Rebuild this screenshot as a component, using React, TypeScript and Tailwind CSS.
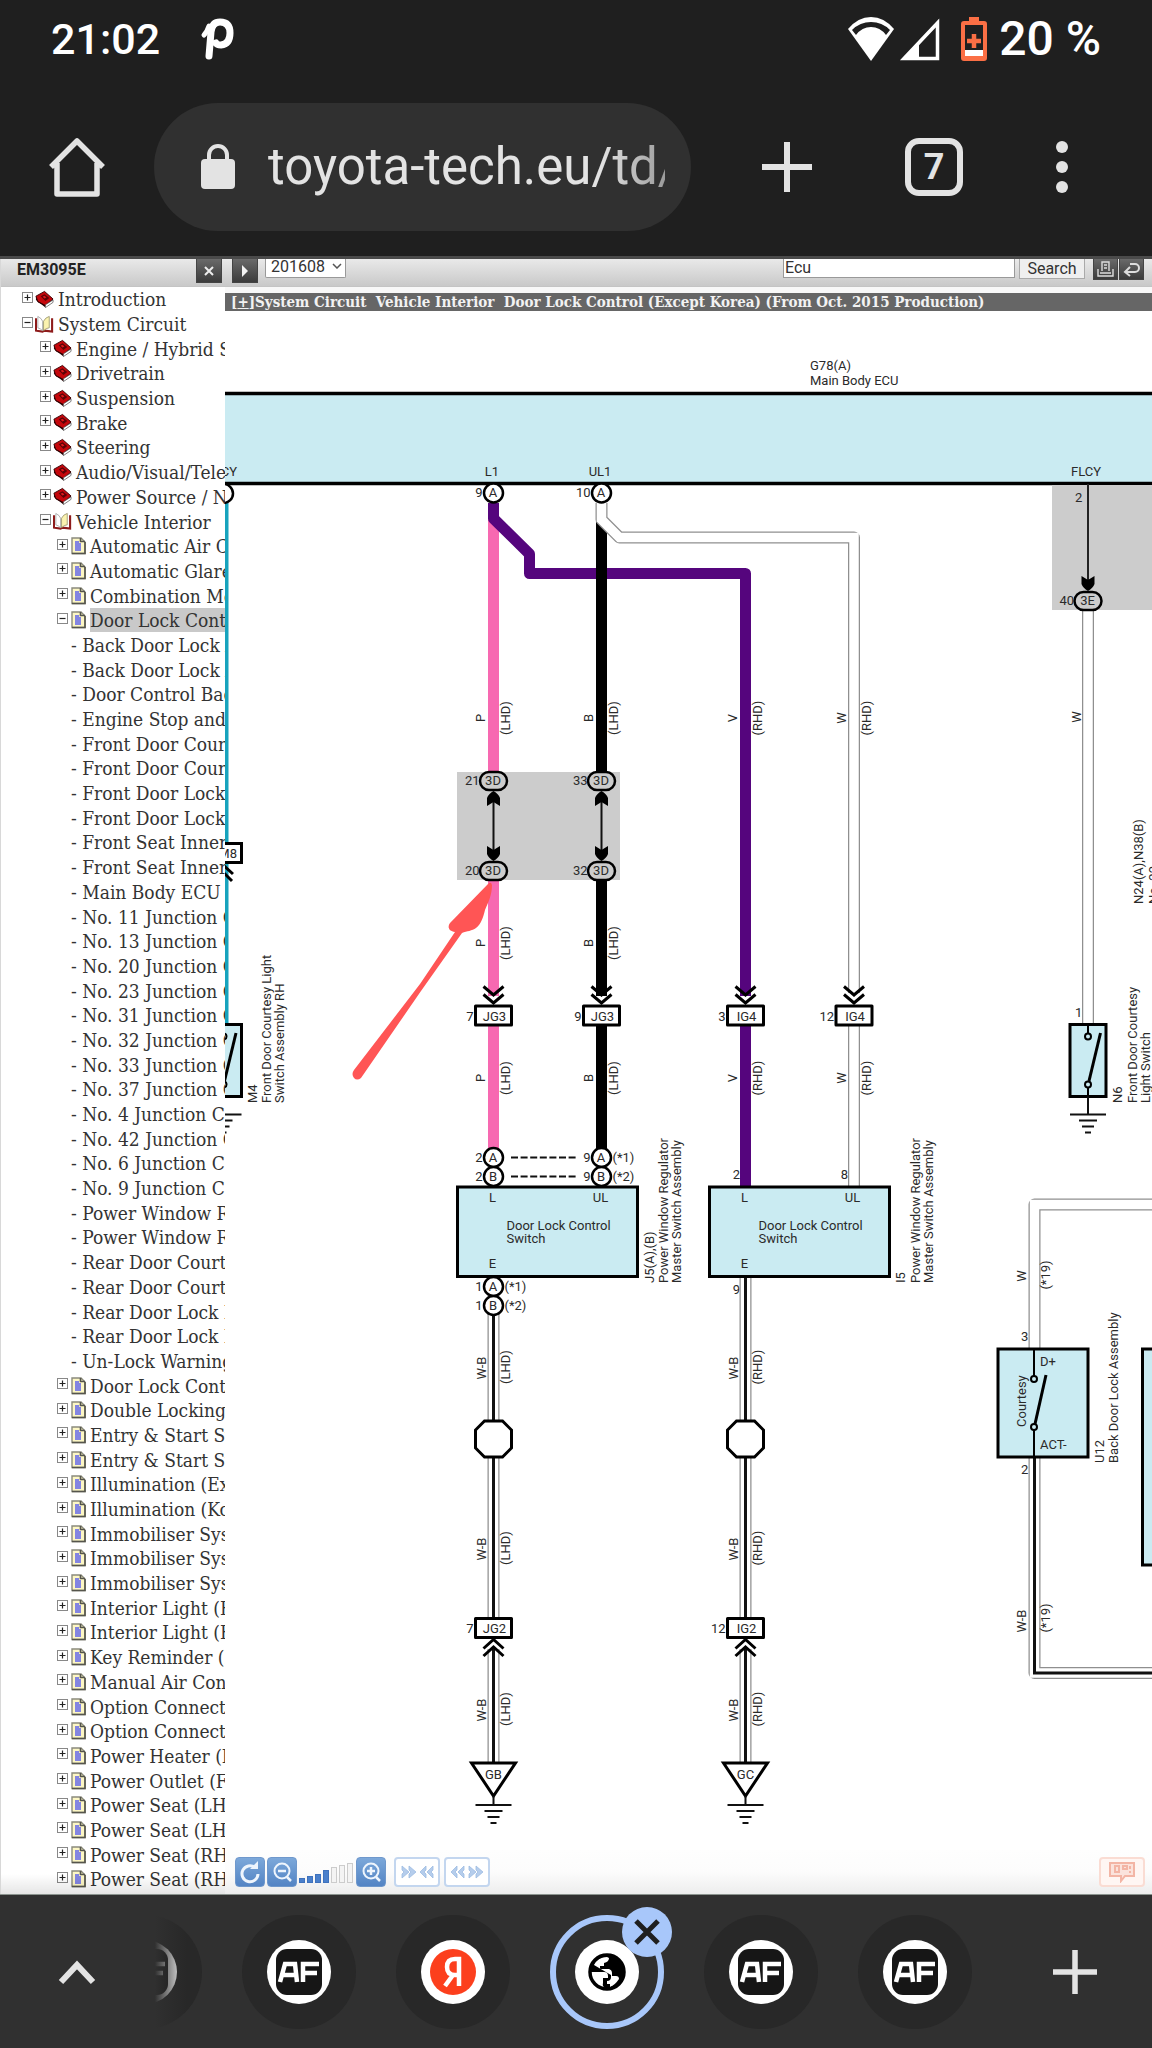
import type { ReactNode } from "react";
import clsx from "clsx";

type RowKind = "book" | "open" | "doc" | "leaf";

interface TreeRow {
  label: string;
  kind: RowKind;
  level: 0 | 1 | 2 | 3;
  expanded?: boolean;
  selected?: boolean;
}

const book = (label: string, level: 0 | 1 = 1): TreeRow => ({ label, kind: "book", level });
const doc = (label: string): TreeRow => ({ label, kind: "doc", level: 2 });
const leaf = (label: string): TreeRow => ({ label, kind: "leaf", level: 3 });

const ROWS: TreeRow[] = [
  book("Introduction", 0),
  { label: "System Circuit", kind: "open", level: 0, expanded: true },
  book("Engine / Hybrid System"),
  book("Drivetrain"),
  book("Suspension"),
  book("Brake"),
  book("Steering"),
  book("Audio/Visual/Telematics"),
  book("Power Source / Network"),
  { label: "Vehicle Interior", kind: "open", level: 1, expanded: true },
  doc("Automatic Air Conditioning"),
  doc("Automatic Glare-Resistant"),
  doc("Combination Meter"),
  { label: "Door Lock Control", kind: "doc", level: 2, expanded: true, selected: true },
  leaf("Back Door Lock Assembly"),
  leaf("Back Door Lock Assembly"),
  leaf("Door Control Back"),
  leaf("Engine Stop and Lock"),
  leaf("Front Door Courtesy"),
  leaf("Front Door Courtesy"),
  leaf("Front Door Lock LH"),
  leaf("Front Door Lock RH"),
  leaf("Front Seat Inner LH"),
  leaf("Front Seat Inner RH"),
  leaf("Main Body ECU"),
  leaf("No. 11 Junction Connector"),
  leaf("No. 13 Junction Connector"),
  leaf("No. 20 Junction Connector"),
  leaf("No. 23 Junction Connector"),
  leaf("No. 31 Junction Connector"),
  leaf("No. 32 Junction Connector"),
  leaf("No. 33 Junction Connector"),
  leaf("No. 37 Junction Connector"),
  leaf("No. 4 Junction Connector"),
  leaf("No. 42 Junction Connector"),
  leaf("No. 6 Junction Connector"),
  leaf("No. 9 Junction Connector"),
  leaf("Power Window Regulator"),
  leaf("Power Window Regulator"),
  leaf("Rear Door Courtesy"),
  leaf("Rear Door Courtesy"),
  leaf("Rear Door Lock LH"),
  leaf("Rear Door Lock RH"),
  leaf("Un-Lock Warning Switch"),
  doc("Door Lock Control"),
  doc("Double Locking"),
  doc("Entry & Start System"),
  doc("Entry & Start System"),
  doc("Illumination (Except Korea)"),
  doc("Illumination (Korea)"),
  doc("Immobiliser System"),
  doc("Immobiliser System"),
  doc("Immobiliser System"),
  doc("Interior Light (From Oct.)"),
  doc("Interior Light (From Oct.)"),
  doc("Key Reminder (Except)"),
  doc("Manual Air Conditioning"),
  doc("Option Connector"),
  doc("Option Connector"),
  doc("Power Heater (Diesel)"),
  doc("Power Outlet (Front)"),
  doc("Power Seat (LHD)"),
  doc("Power Seat (LHD)"),
  doc("Power Seat (RHD)"),
  doc("Power Seat (RHD)"),
];

const INDENT = ["pl-[21px]", "pl-[39px]", "pl-[56px]", "pl-[70px]"];

/* ---------- tree ---------- */

function BookIcon() {
  return (
    <svg width="19" height="19" viewBox="0 0 20 19" className="shrink-0">
      <path d="M1 6 10 1l9 8-8 7L3 12z" fill="#c4070c" stroke="#3a0204" strokeWidth="1" />
      <path d="M6 6l4-2 5 4-4 3z" fill="#5a0306" />
      <path d="M8 6.500l2-1 2 2-2 1z" fill="#e0181c" />
      <path d="M1 6v4l10 8v-2.500L3 11z" fill="#2b0203" />
      <path d="M11 15l8-5v2.500L11 18z" fill="#fff" stroke="#444" strokeWidth=".7" />
    </svg>
  );
}

function OpenBookIcon() {
  return (
    <svg width="19" height="19" viewBox="0 0 20 19" className="shrink-0">
      <path d="M1 3v13l7 1 2-1 8 1V3" fill="none" stroke="#8e1b1b" strokeWidth="2.200" />
      <path d="M3 1q4 2 5 5v10q-2-2-5-3z" fill="#fff" stroke="#999" strokeWidth=".8" />
      <path d="M9 6q2-4 6-5v12q-3 0-6 3z" fill="#fbf3b0" stroke="#8d8a60" strokeWidth=".8" />
    </svg>
  );
}

function DocIcon() {
  return (
    <svg width="15" height="18" viewBox="0 0 15 18" className="shrink-0">
      <path d="M1 1h9l4 4v11.500H1z" fill="#fdf7c4" stroke="#8b8b7c" strokeWidth="1.400" />
      <path d="M9.500 1v3.500H14M14 5v11.500H1" fill="none" stroke="#55554c" strokeWidth="1.600" />
      <path d="M4 5h4M4 7h6M4 9h6M4 11h6M4 13h6" stroke="#5b60ea" strokeWidth="1.500" />
    </svg>
  );
}

function Toggle({ expanded, label }: { expanded?: boolean; label: string }) {
  return (
    <button aria-label={`Toggle ${label}`} className="mb-1 h-[11px] w-[11px] shrink-0">
      <svg width="11" height="11" viewBox="0 0 11 11" className="block">
        <rect x=".5" y=".5" width="10" height="10" fill="#fff" stroke="#888" />
        <path d={expanded ? "M2.500 5.500h6" : "M2.500 5.500h6M5.500 2.500v6"} stroke="#222" strokeWidth="1.200" />
      </svg>
    </button>
  );
}

function Tree() {
  return (
    <ul className="flex min-h-0 flex-1 flex-col pb-0.5 font-['DejaVu_Serif_Condensed','DejaVu_Serif',serif] text-[19px] leading-6 text-[#333]">
      {ROWS.map((row, i) => (
        <li key={i} className={clsx("flex min-h-0 flex-1 items-center whitespace-nowrap", INDENT[row.level])}>
          {row.kind !== "leaf" && (
            <span className={clsx("mr-1 flex items-center", row.kind === "doc" ? "gap-[3px]" : "gap-0.5")}>
              <Toggle expanded={row.expanded} label={row.label} />
              {row.kind === "book" && <BookIcon />}
              {row.kind === "open" && <OpenBookIcon />}
              {row.kind === "doc" && <DocIcon />}
            </span>
          )}
          <a href="#tree" className={clsx(row.selected && "grow bg-[#c9c9c9]")}>
            {row.kind === "leaf" ? `- ${row.label}` : row.label}
          </a>
        </li>
      ))}
    </ul>
  );
}

/* ---------- wiring diagram ---------- */

interface LabelProps {
  x: number;
  y: number;
  anchor?: "start" | "middle" | "end";
  children: ReactNode;
}

function Label({ x, y, anchor = "start", children }: LabelProps) {
  return (
    <text x={x} y={y} textAnchor={anchor}>
      {children}
    </text>
  );
}

// text that runs bottom to top, x is its baseline
function VLabel({ x, y, anchor = "start", children }: LabelProps) {
  return (
    <text textAnchor={anchor} transform={`translate(${x} ${y}) rotate(-90)`}>
      {children}
    </text>
  );
}

function Wire({ d, color }: { d: string; color: string }) {
  return <path d={d} fill="none" stroke={color} strokeWidth="11" strokeLinejoin="round" />;
}

function WhiteWire({ d, core }: { d: string; core?: boolean }) {
  return (
    <g fill="none" strokeLinejoin="round">
      <path d={d} stroke="#8f8f8f" strokeWidth="12" />
      <path d={d} stroke="#fff" strokeWidth="9.500" strokeLinejoin="miter" />
      {core && <path d={d} stroke="#111" strokeWidth="3" strokeLinejoin="miter" />}
    </g>
  );
}

function Pin({ x, y, name, no, note }: { x: number; y: number; name: string; no: string; note?: string }) {
  return (
    <g>
      <circle cx={x} cy={y} r="9.500" fill="#fff" stroke="#000" strokeWidth="2.500" />
      <Label x={x - 0.500} y={y + 4} anchor="middle">{name}</Label>
      <Label x={x - 11} y={y + 4} anchor="end">{no}</Label>
      {note && <Label x={x + 11} y={y + 4}>{note}</Label>}
    </g>
  );
}

function Pill({ x, y, name, no }: { x: number; y: number; name: string; no: string }) {
  return (
    <g>
      <rect x={x - 13.500} y={y - 9} width="27" height="18" rx="9" fill="#ccc" stroke="#000" strokeWidth="2.500" />
      <Label x={x - 0.500} y={y + 4} anchor="middle">{name}</Label>
      <Label x={x - 14} y={y + 4} anchor="end">{no}</Label>
    </g>
  );
}

function Connector({ x, y, name, no, up }: { x: number; y: number; name: string; no: string; up?: boolean }) {
  const chevrons = up
    ? `M${x - 10} ${y + 20.5}l10-9 10 9M${x - 10} ${y + 28}l10-9 10 9`
    : `M${x - 10} ${y - 29}l10 8.5 10-8.5M${x - 10} ${y - 21}l10 8.500 10-8.500`;
  return (
    <g>
      <rect x={x - 18} y={y - 9.500} width="36" height="19" fill="#fff" stroke="#000" strokeWidth="3" strokeLinejoin="round" />
      <path d={chevrons} fill="none" stroke="#000" strokeWidth="3" />
      <Label x={x + 1} y={y + 5} anchor="middle">{name}</Label>
      <Label x={x - 20} y={y + 5} anchor="end">{no}</Label>
    </g>
  );
}

function ArrowHead({ x, y, down }: { x: number; y: number; down?: boolean }) {
  return (
    <path
      d={
        down
          ? `M${x} ${y}q-5-3-6.500-7v-8l6.500 4 6.500-4v8q-1.500 4-6.500 7z`
          : `M${x} ${y}q-5 3-6.500 7v8l6.500-4 6.500 4v-8q-1.500-4-6.500-7z`
      }
    />
  );
}

function Ground({ x, y, stem }: { x: number; y: number; stem: number }) {
  return (
    <path
      d={`M${x} ${y - stem}v${stem}M${x - 18} ${y}h36M${x - 9} ${y + 6}h18M${x - 6} ${y + 12}h12M${x - 3} ${y + 18}h6`}
      stroke="#111"
      strokeWidth="2"
    />
  );
}

function CourtesySwitch({ x }: { x: number }) {
  return (
    <g stroke="#000" fill="none">
      <rect x={x - 18} y="1024.500" width="36" height="72" fill="#caebf2" strokeWidth="3" />
      <path d={`M${x} 1024v10M${x} 1087v10`} strokeWidth="2" />
      <path d={`M${x + 1} 1081l11.500-48`} strokeWidth="3" />
      <circle cx={x} cy="1036.500" r="3" strokeWidth="2" fill="#caebf2" />
      <circle cx={x} cy="1084.500" r="3" strokeWidth="2" fill="#caebf2" />
    </g>
  );
}

function DoorLockSwitch({ x }: { x: number }) {
  return (
    <g>
      <rect x={x} y="1187" width="180" height="89.500" fill="#caebf2" stroke="#000" strokeWidth="3" />
      <Label x={x + 35} y={1202} anchor="middle">L</Label>
      <Label x={x + 143} y={1202} anchor="middle">UL</Label>
      <Label x={x + 49} y={1230}>Door Lock Control</Label>
      <Label x={x + 49} y={1243}>Switch</Label>
      <Label x={x + 35} y={1268} anchor="middle">E</Label>
      <VLabel x={x + 210} y={1283}>Power Window Regulator</VLabel>
      <VLabel x={x + 223} y={1283}>Master Switch Assembly</VLabel>
    </g>
  );
}

function GroundBranch({ x, side, box, no, name }: { x: number; side: string; box: string; no: string; name: string }) {
  return (
    <g>
      <WhiteWire d={`M${x} ${side === "LHD" ? 1314 : 1278}V1422`} core />
      <WhiteWire d={`M${x} 1457V1618`} core />
      <WhiteWire d={`M${x} 1649V1763`} core />
      <path d={`M${x - 9} 1421h18l9 9v18l-9 9h-18l-9-9v-18z`} fill="#fff" stroke="#000" strokeWidth="3" />
      <Connector x={x} y={1628} name={box} no={no} up />
      {[1368, 1549, 1710].map((y) => (
        <g key={y}>
          <VLabel x={x - 8} y={y} anchor="middle">W-B</VLabel>
          <VLabel x={x + 16} y={y - 1} anchor="middle">({side})</VLabel>
        </g>
      ))}
      <path d={`M${x - 22} 1763h44l-22 33z`} fill="#fff" stroke="#000" strokeWidth="3" />
      <Label x={x} y={1779} anchor="middle">{name}</Label>
      <Ground x={x} y={1805} stem={9} />
    </g>
  );
}

const WIRE_LABELS = [
  { x: 493, name: "P", side: "(LHD)", ys: [718, 943, 1078] },
  { x: 601, name: "B", side: "(LHD)", ys: [718, 943, 1078] },
  { x: 745, name: "V", side: "(RHD)", ys: [718, 1078] },
  { x: 854, name: "W", side: "(RHD)", ys: [718, 1078] },
];

function Diagram() {
  return (
    <svg
      width="927"
      height="1581"
      viewBox="225 311 927 1581"
      role="img"
      aria-label="Door lock control wiring diagram"
      className="block max-w-none font-[Roboto,sans-serif] text-[13px]"
      fill="#2a2a2a"
    >
      {/* main body ECU */}
      <rect x="200" y="393.500" width="1000" height="90" fill="#caebf2" stroke="#000" strokeWidth="3.500" />
      <Label x={810} y={370}>G78(A)</Label>
      <Label x={810} y={385}>Main Body ECU</Label>
      <Label x={492} y={476} anchor="middle">L1</Label>
      <Label x={600} y={476} anchor="middle">UL1</Label>
      <Label x={1086} y={476} anchor="middle">FLCY</Label>
      <Label x={237} y={476} anchor="end">CY</Label>

      {/* left edge branch */}
      <Wire d="M223 503V1024" color="#17a3bd" />
      <circle cx="223.500" cy="493.500" r="9.500" fill="#fff" stroke="#000" strokeWidth="2.500" />
      <rect x="205.500" y="843.500" width="36" height="19" fill="#fff" stroke="#000" strokeWidth="3" />
      <Label x={237} y={858} anchor="end">M8</Label>
      <path d="M223 865l10 9M223 872l9 9" stroke="#000" strokeWidth="3" />
      <CourtesySwitch x={223.5} />
      <Ground x={223.5} y={1114.5} stem={18} />
      <VLabel x={257} y={1103}>M4</VLabel>
      <VLabel x={271} y={1103}>Front Door Courtesy Light</VLabel>
      <VLabel x={284} y={1103}>Switch Assembly RH</VLabel>

      {/* wires */}
      <rect x="457" y="772" width="163" height="108" fill="#ccc" />
      <Wire d="M493.500 515V773" color="#f769b1" />
      <Wire d="M493.500 880V996" color="#f769b1" />
      <Wire d="M493.500 1024V1150" color="#f769b1" />
      <Wire d="M493.500 503V518.500L529.500 554V573.500H745.500V996" color="#55057d" />
      <Wire d="M745.500 1024V1187" color="#55057d" />
      <Wire d="M601.500 520V773" color="#000" />
      <Wire d="M601.500 880V996" color="#000" />
      <Wire d="M601.500 1024V1150" color="#000" />
      <WhiteWire d="M601.500 503V519.500L619.500 537.500H854V993" />
      <WhiteWire d="M854 1024V1187" />

      <Pin x={493.5} y={493} name="A" no="9" />
      <Pin x={601.5} y={493} name="A" no="10" />

      {WIRE_LABELS.map((w) =>
        w.ys.map((y) => (
          <g key={`${w.name}${y}`}>
            <VLabel x={w.x - 8} y={y} anchor="middle">{w.name}</VLabel>
            <VLabel x={w.x + 17} y={y} anchor="middle">{w.side}</VLabel>
          </g>
        )),
      )}

      {/* junction block */}
      {[493.5, 601.5].map((x) => (
        <g key={x} fill="#000">
          <path d={`M${x} 800V852`} stroke="#111" strokeWidth="2" />
          <ArrowHead x={x} y={791} />
          <ArrowHead x={x} y={861} down />
        </g>
      ))}
      <Pill x={493.5} y={781} name="3D" no="21" />
      <Pill x={601.5} y={781} name="3D" no="33" />
      <Pill x={493.5} y={871} name="3D" no="20" />
      <Pill x={601.5} y={871} name="3D" no="32" />

      <Connector x={493.5} y={1015.5} name="JG3" no="7" />
      <Connector x={601.5} y={1015.5} name="JG3" no="9" />
      <Connector x={745.5} y={1015.5} name="IG4" no="3" />
      <Connector x={854} y={1015.5} name="IG4" no="12" />

      {/* door lock control switches */}
      <path d="M511 1157.500h65M511 1176.500h65" stroke="#111" strokeWidth="2" strokeDasharray="7 2.600" />
      <Pin x={493.5} y={1157.5} name="A" no="2" />
      <Pin x={493.5} y={1176.5} name="B" no="2" />
      <Pin x={601.5} y={1157.5} name="A" no="9" note="(*1)" />
      <Pin x={601.5} y={1176.5} name="B" no="9" note="(*2)" />
      <DoorLockSwitch x={457.5} />
      <DoorLockSwitch x={709.5} />
      <VLabel x={654} y={1283}>J5(A),(B)</VLabel>
      <VLabel x={905} y={1283}>I5</VLabel>
      <Label x={740} y={1179} anchor="end">2</Label>
      <Label x={848} y={1179} anchor="end">8</Label>
      <Label x={740} y={1294} anchor="end">9</Label>

      <GroundBranch x={493.5} side="LHD" box="JG2" no="7" name="GB" />
      <GroundBranch x={745.5} side="RHD" box="IG2" no="12" name="GC" />
      <Pin x={493.5} y={1286.5} name="A" no="1" note="(*1)" />
      <Pin x={493.5} y={1305.5} name="B" no="1" note="(*2)" />

      {/* front door courtesy branch */}
      <rect x="1052" y="485" width="110" height="125" fill="#ccc" />
      <path d="M1088 484V580" stroke="#222" strokeWidth="2" />
      <g fill="#000">
        <ArrowHead x={1088} y={591} down />
      </g>
      <WhiteWire d="M1088 609V1024" />
      <Pill x={1088} y={601} name="3E" no="40" />
      <Label x={1075} y={502}>2</Label>
      <VLabel x={1081} y={717} anchor="middle">W</VLabel>
      <Label x={1075} y={1017}>1</Label>
      <CourtesySwitch x={1088} />
      <Ground x={1088} y={1114.5} stem={18} />
      <VLabel x={1143} y={904}>N24(A),N38(B)</VLabel>
      <VLabel x={1158} y={904}>No. 22</VLabel>
      <VLabel x={1122} y={1103}>N6</VLabel>
      <VLabel x={1137} y={1103}>Front Door Courtesy</VLabel>
      <VLabel x={1150} y={1103}>Light Switch</VLabel>

      {/* back door lock */}
      <WhiteWire d="M1034.500 1350V1204.500H1170" />
      <WhiteWire d="M1034.500 1457V1673H1170" core />
      <g stroke="#000" fill="none">
        <rect x="998" y="1349" width="90" height="108" fill="#caebf2" strokeWidth="3" />
        <path d="M1034 1349v27M1034 1430v27" strokeWidth="2" />
        <path d="M1035 1424l11-49" strokeWidth="3" />
        <circle cx="1034" cy="1379" r="3" fill="#caebf2" strokeWidth="2" />
        <circle cx="1034" cy="1427" r="3" fill="#caebf2" strokeWidth="2" />
        <rect x="1142.500" y="1349" width="30" height="216" fill="#caebf2" strokeWidth="3" />
      </g>
      <Label x={1040} y={1366}>D+</Label>
      <Label x={1040} y={1449}>ACT-</Label>
      <Label x={1021} y={1341}>3</Label>
      <Label x={1021} y={1474}>2</Label>
      <VLabel x={1026} y={1276} anchor="middle">W</VLabel>
      <VLabel x={1050} y={1275} anchor="middle">(*19)</VLabel>
      <VLabel x={1026} y={1427}>Courtesy</VLabel>
      <VLabel x={1026} y={1621} anchor="middle">W-B</VLabel>
      <VLabel x={1050} y={1618} anchor="middle">(*19)</VLabel>
      <VLabel x={1104} y={1463}>U12</VLabel>
      <VLabel x={1118} y={1463}>Back Door Lock Assembly</VLabel>

      {/* hand-drawn marker */}
      <path
        d="M488 884q3-3 4 1c0 10-4 18-7 25-2 8-4 14-9 18-4 3-9 3-14 5L421 991 361 1078q-4 3-7 0-3-4 0-8L420 984l35-52c-6-1-8-5-5-9z"
        fill="#ff5555"
      />
    </svg>
  );
}

/* ---------- viewer controls ---------- */

function DarkButton({ label, className, children }: { label: string; className?: string; children: ReactNode }) {
  return (
    <button
      aria-label={label}
      className={clsx(
        "flex items-center justify-center border border-t-0 border-[#444] bg-linear-to-b from-[#6a6a6a] to-[#3c3c3c]",
        className,
      )}
    >
      {children}
    </button>
  );
}

function BlueButton({ label, children }: { label: string; children: ReactNode }) {
  return (
    <button
      aria-label={label}
      className="flex h-[30px] w-[30px] items-center justify-center rounded-sm border border-[#6f98cc] bg-linear-to-b from-[#7ca8da] to-[#5384c4]"
    >
      <svg width="26" height="26" viewBox="0 0 26 26" fill="none" stroke="#eef5fd">
        {children}
      </svg>
    </button>
  );
}

function FadedButton({ label, children }: { label: string; children: ReactNode }) {
  return (
    <button aria-label={label} className="flex h-[30px] w-[46px] items-center justify-center rounded-sm border-2 border-[#c3d6ef] bg-white">
      <svg width="34" height="16" viewBox="0 0 34 16" fill="#b5cdec" stroke="#9dbbe2" strokeWidth=".8">
        {children}
      </svg>
    </button>
  );
}

function ViewerTools() {
  const bars = [5, 7, 9, 13, 16, 18, 20];
  return (
    <div className="absolute inset-x-0 bottom-0 flex h-11 items-start bg-linear-to-b from-[#fefefe] via-[#fcfcfc] to-[#ededed] pt-[7px] pr-[7px] pl-2.5">
      <BlueButton label="Reset view">
        <path d="M18 8.500a8 8 0 1 0 3 6.500" strokeWidth="3" />
        <path d="M13 10h8V2z" fill="#eef5fd" stroke="none" />
      </BlueButton>
      <div className="ml-0.5 flex items-start">
        <BlueButton label="Zoom out">
          <circle cx="13" cy="12" r="7.500" strokeWidth="2" />
          <path d="M9 12h8M18 18l4 4" strokeWidth="2.500" />
        </BlueButton>
        <div className="flex h-[26px] w-[59px] items-end gap-0.5 pl-0.5">
          {bars.map((h, i) => (
            <span
              key={h}
              className={clsx("w-1.5 border", i < 4 ? "border-[#3f72bd] bg-[#4a80cc]" : "border-[#ccc] bg-[#f4f4f4]")}
              style={{ height: h }}
            />
          ))}
        </div>
        <BlueButton label="Zoom in">
          <circle cx="13" cy="12" r="7.500" strokeWidth="2" />
          <path d="M9 12h8M13 8v8M18 18l4 4" strokeWidth="2.500" />
        </BlueButton>
      </div>
      <div className="ml-2 flex gap-1">
        <FadedButton label="Narrow">
          <path d="M2 2l7 6-7 6v-4l2-2-2-2zM9 2l7 6-7 6v-4l2-2-2-2zM26 2l-6 6 6 6v-4l-2-2 2-2zM33 2l-6 6 6 6v-4l-2-2 2-2z" />
        </FadedButton>
        <FadedButton label="Widen">
          <path d="M7 2L1 8l6 6v-4L5 8l2-2zM14 2L8 8l6 6v-4l-2-2 2-2zM19 2l7 6-7 6v-4l2-2-2-2zM26 2l7 6-7 6v-4l2-2-2-2z" />
        </FadedButton>
      </div>
      <button
        aria-label="Feedback"
        className="ml-auto flex h-[30px] w-[46px] items-center justify-center rounded-sm border-2 border-[#fadcd3] bg-[#fff6f3]"
      >
        <svg width="28" height="22" viewBox="0 0 28 22" fill="#fbe3dc" stroke="#f3b5a5" strokeWidth="2">
          <path d="M2 2h24v13H17l-4 5v-5H2z" />
          <path d="M7 5v6h4V5zM15 5h4v3h-4zM22 5v3M22 10v2" fill="none" />
        </svg>
      </button>
    </div>
  );
}

function Viewer() {
  return (
    <main className="flex min-h-0 flex-1 border-t-[3px] border-[#4a4a4a] bg-white font-[Roboto,sans-serif]">
      <aside className="relative flex w-[225px] shrink-0 flex-col overflow-hidden border-l border-[#d8d8d8]">
        <div className="flex h-7 shrink-0 items-start justify-between border-b border-[#c4c4c4] bg-linear-to-b from-[#e9e9e9] to-[#c9c9c9] pr-[3px] pl-4">
          <h2 className="pt-px text-[16px] leading-5 font-bold text-[#222]">EM3095E</h2>
          <DarkButton label="Close index" className="h-6 w-[26px]">
            <svg width="10" height="10" viewBox="0 0 10 10">
              <path d="M1 1l8 8M9 1L1 9" stroke="#eee" strokeWidth="2" />
            </svg>
          </DarkButton>
        </div>
        <Tree />
        <div className="pointer-events-none absolute inset-x-0 bottom-0 h-5 bg-linear-to-b from-transparent to-black/10" />
      </aside>

      <section className="flex min-w-0 flex-1 flex-col">
        <div className="flex h-7 shrink-0 items-start border-b border-[#c4c4c4] bg-linear-to-b from-[#e9e9e9] to-[#c9c9c9] pr-2 pl-[7px] text-[16px] leading-5 text-[#333]">
          <DarkButton label="Show index" className="h-6 w-[26px]">
            <svg width="8" height="12" viewBox="0 0 8 12">
              <path d="M1 0l6 6-6 6z" fill="#f4f4f4" />
            </svg>
          </DarkButton>
          <div className="relative ml-[7px] h-[19px] w-[81px]">
            <select
              aria-label="Edition"
              className="block h-[19px] w-full appearance-none rounded-b-xs border border-t-0 border-[#999] bg-white pb-0.5 pl-[5px] leading-4"
            >
              <option>201608</option>
            </select>
            <svg width="10" height="6" viewBox="0 0 10 6" className="pointer-events-none absolute top-1 right-1">
              <path d="M1 1l4 4 4-4" fill="none" stroke="#555" strokeWidth="1.500" />
            </svg>
          </div>
          <input
            aria-label="Search text"
            defaultValue="Ecu"
            className="mr-1 ml-auto h-[19px] w-[232px] rounded-none border border-t-0 border-[#999] bg-white px-px text-[16px]"
          />
          <button className="h-5 w-[66px] border border-t-0 border-[#aaa] bg-[#efefef] leading-4">Search</button>
          <DarkButton label="Print" className="ml-2 h-[21px] w-[25px]">
            <svg width="19" height="17" viewBox="0 0 19 17" fill="none" stroke="#ddd" strokeWidth="1.400">
              <path d="M6 10V1h7v9M2 8v7h15V8M4 12h11M8 4h3M8 7h3" />
            </svg>
          </DarkButton>
          <DarkButton label="Back" className="ml-px h-[21px] w-[25px]">
            <svg width="19" height="17" viewBox="0 0 19 17" fill="none" stroke="#ddd" strokeWidth="2">
              <path d="M8 3h5a4 4 0 0 1 0 8H4M8 6L3 11l5 4" />
            </svg>
          </DarkButton>
        </div>
        <div className="shrink-0 bg-[#f8f8f8] pt-1.5">
          <h1 className="h-[18px] overflow-hidden bg-[#666] pl-1.5 font-['DejaVu_Serif_Condensed','DejaVu_Serif',serif] text-[15px] leading-[18px] font-bold whitespace-pre text-[#f2f2f2]">
            [<a href="#tree" className="underline">+</a>]System Circuit&nbsp; Vehicle Interior&nbsp; Door Lock Control (Except Korea) (From Oct. 2015 Production)
          </h1>
        </div>
        <div className="relative min-h-0 flex-1 overflow-hidden">
          <Diagram />
          <ViewerTools />
        </div>
      </section>
    </main>
  );
}

/* ---------- phone and browser chrome ---------- */

function StatusBar() {
  return (
    <div className="flex h-20 shrink-0 items-center px-[51px] pb-0.5 font-[Roboto,sans-serif] text-[43px] leading-none font-medium text-white">
      <span>21:02</span>
      <svg width="38" height="46" viewBox="0 0 38 46" className="ml-[38px]" fill="none" stroke="#fff" strokeWidth="7" strokeLinecap="round">
        <path d="M11 40l2-24Q14 6 22 6q10 0 10 11 0 11-9 12-4 0-5-2" />
        <path d="M6 19q3-3 5-9" strokeWidth="5" />
      </svg>
      <div className="ml-auto flex items-center">
        <svg width="48" height="46" viewBox="0 0 48 46" fill="#fff">
          <path d="M24 45L1 13Q11 1 24 1t23 12z" />
          <path d="M5 14Q13 6 24 6t19 8l-4 5Q33 11 24 11T9 19z" fill="#1f1f1f" />
        </svg>
        <svg width="42" height="44" viewBox="0 0 42 44" className="ml-1" fill="none" stroke="#fff" strokeWidth="3.500">
          <path d="M5 41.500L38.500 6v35.500z" />
          <path d="M5 41.500L20 26v15z" fill="#fff" stroke="none" />
        </svg>
        <svg width="26" height="44" viewBox="0 0 26 44" className="mr-3 ml-5">
          <path d="M8 0h10v4h5q3 0 3 3v34q0 3-3 3H3q-3 0-3-3V7q0-3 3-3h5z" fill="#fb6f45" />
          <path d="M4 8h18v31H4z" fill="#1f1f1f" />
          <path d="M4 33h18v6H4z" fill="#fff" />
          <path d="M13 17v14M6 24h14" stroke="#fb6f45" strokeWidth="4.500" />
        </svg>
      </div>
      <span className="text-[48px]">20&nbsp;%</span>
    </div>
  );
}

function AddressBar() {
  return (
    <div className="flex h-44 shrink-0 items-center pt-4 pb-[18px] pl-12 text-[#e3e3e3]">
      <button aria-label="Home">
        <svg width="58" height="62" viewBox="0 0 58 62" fill="none" stroke="currentColor" strokeWidth="5.500" strokeLinejoin="round">
          <path d="M3 31L29 5l26 26M9 27v31h40V27" />
        </svg>
      </button>
      <div className="ml-12 flex h-32 min-w-0 flex-1 items-center rounded-full bg-[#303030] pr-[26px] pl-[46px]">
        <svg width="36" height="46" viewBox="0 0 36 46" className="shrink-0">
          <rect x="1" y="15" width="34" height="30" rx="4" fill="currentColor" />
          <path d="M9 17V11a9 9 0 0 1 18 0v6" fill="none" stroke="currentColor" strokeWidth="4" />
        </svg>
        <div className="relative ml-8 min-w-0 flex-1">
          <input
            aria-label="Address"
            defaultValue="toyota-tech.eu/td/"
            className="block w-full bg-transparent font-[Roboto,sans-serif] text-[51px] leading-[64px]"
          />
          <span className="pointer-events-none absolute inset-y-0 right-0 w-16 bg-linear-to-r from-transparent to-[#303030]/40" />
        </div>
      </div>
      <button aria-label="New tab" className="ml-[70px]">
        <svg width="52" height="52" viewBox="0 0 52 52" stroke="currentColor" strokeWidth="6">
          <path d="M26 1v50M1 26h50" />
        </svg>
      </button>
      <button
        aria-label="7 open tabs"
        className="ml-[92px] h-[58px] w-[58px] rounded-[14px] border-[6px] border-current font-[Roboto,sans-serif] text-[36px] leading-none font-bold"
      >
        7
      </button>
      <button aria-label="More" className="mr-[84px] ml-[93px]">
        <svg width="12" height="52" viewBox="0 0 12 52" fill="currentColor">
          <circle cx="6" cy="6" r="6" />
          <circle cx="6" cy="26" r="6" />
          <circle cx="6" cy="46" r="6" />
        </svg>
      </button>
    </div>
  );
}

function AfIcon() {
  return (
    <svg width="64" height="64" viewBox="0 0 64 64">
      <circle cx="32" cy="32" r="32" fill="#fff" />
      <rect x="9" y="9" width="46" height="46" rx="11" fill="#161616" />
      <g fill="none" stroke="#fff" strokeWidth="4.500" strokeLinejoin="miter">
        <path d="M13 42l5-18h10l2 18M16 35h13" />
        <path d="M36 42V24h16M36 33h14" />
      </g>
    </svg>
  );
}

function YandexIcon() {
  return (
    <svg width="64" height="64" viewBox="0 0 64 64">
      <circle cx="32" cy="32" r="32" fill="#fff" />
      <circle cx="32" cy="32" r="23" fill="#fc3f1d" />
      <path d="M38 46V19h-4q-8 0-8 8 0 8 8 8h4M32 35l-8 11" fill="none" stroke="#fff" strokeWidth="4.500" />
    </svg>
  );
}

function GlobeIcon() {
  return (
    <svg width="64" height="64" viewBox="0 0 64 64">
      <circle cx="32" cy="32" r="32" fill="#fff" />
      <circle cx="32" cy="32" r="18" fill="#000" />
      <path d="M16 32h13q4 0 4 4v2h-5v5q-1 3 2 5Q17 47 16 32zM19 25q4-8 13-8l2 1q0 4-5 5v3h-4v3h9q3 1 3 4v3h4q3 0 3 3-4 6-9 8v-3h-3v-3q4 0 4-4v-2z" fill="#fff" />
      <circle cx="32" cy="32" r="17" fill="none" stroke="#000" strokeWidth="3.500" />
    </svg>
  );
}

const TABS = ["af", "af", "yandex", "globe", "af", "af"];

function TabStrip() {
  return (
    <nav className="flex h-[154px] shrink-0 items-center border-t border-[#8b938e] bg-[#303030] text-[#e3e3e3]">
      <button aria-label="Expand tabs" className="flex w-[155px] shrink-0 pl-[58px]">
        <svg width="38" height="26" viewBox="0 0 38 26" fill="none" stroke="currentColor" strokeWidth="6">
          <path d="M3 23L19 6l16 17" />
        </svg>
      </button>
      <div className="relative flex h-full min-w-0 flex-1 items-center justify-end gap-10 overflow-hidden">
        {TABS.map((tab, i) => (
          <div key={i} className="relative shrink-0">
            <button
              aria-label={`Tab ${i + 1}`}
              className={clsx(
                "flex h-[114px] w-[114px] items-center justify-center rounded-full",
                tab === "globe" ? "border-[6px] border-[#a8c7fa]" : "bg-[#282828]",
              )}
            >
              {tab === "af" && <AfIcon />}
              {tab === "yandex" && <YandexIcon />}
              {tab === "globe" && <GlobeIcon />}
            </button>
            {tab === "globe" && (
              <button
                aria-label="Close tab"
                className="absolute -top-2 -right-2 flex h-[50px] w-[50px] items-center justify-center rounded-full bg-[#a8c7fa]"
              >
                <svg width="26" height="26" viewBox="0 0 26 26" stroke="#1f1f1f" strokeWidth="5">
                  <path d="M2 2l22 22M24 2L2 24" />
                </svg>
              </button>
            )}
          </div>
        ))}
        <span className="pointer-events-none absolute inset-y-0 left-0 w-8 bg-linear-to-r from-[#303030] to-transparent" />
      </div>
      <button aria-label="New tab in group" className="flex w-[180px] shrink-0 pl-20">
        <svg width="46" height="46" viewBox="0 0 46 46" stroke="currentColor" strokeWidth="5.500">
          <path d="M23 1v44M1 23h44" />
        </svg>
      </button>
    </nav>
  );
}

export default function App() {
  return (
    <div className="flex h-screen flex-col overflow-hidden bg-[#1f1f1f]">
      <StatusBar />
      <AddressBar />
      <Viewer />
      <TabStrip />
    </div>
  );
}
